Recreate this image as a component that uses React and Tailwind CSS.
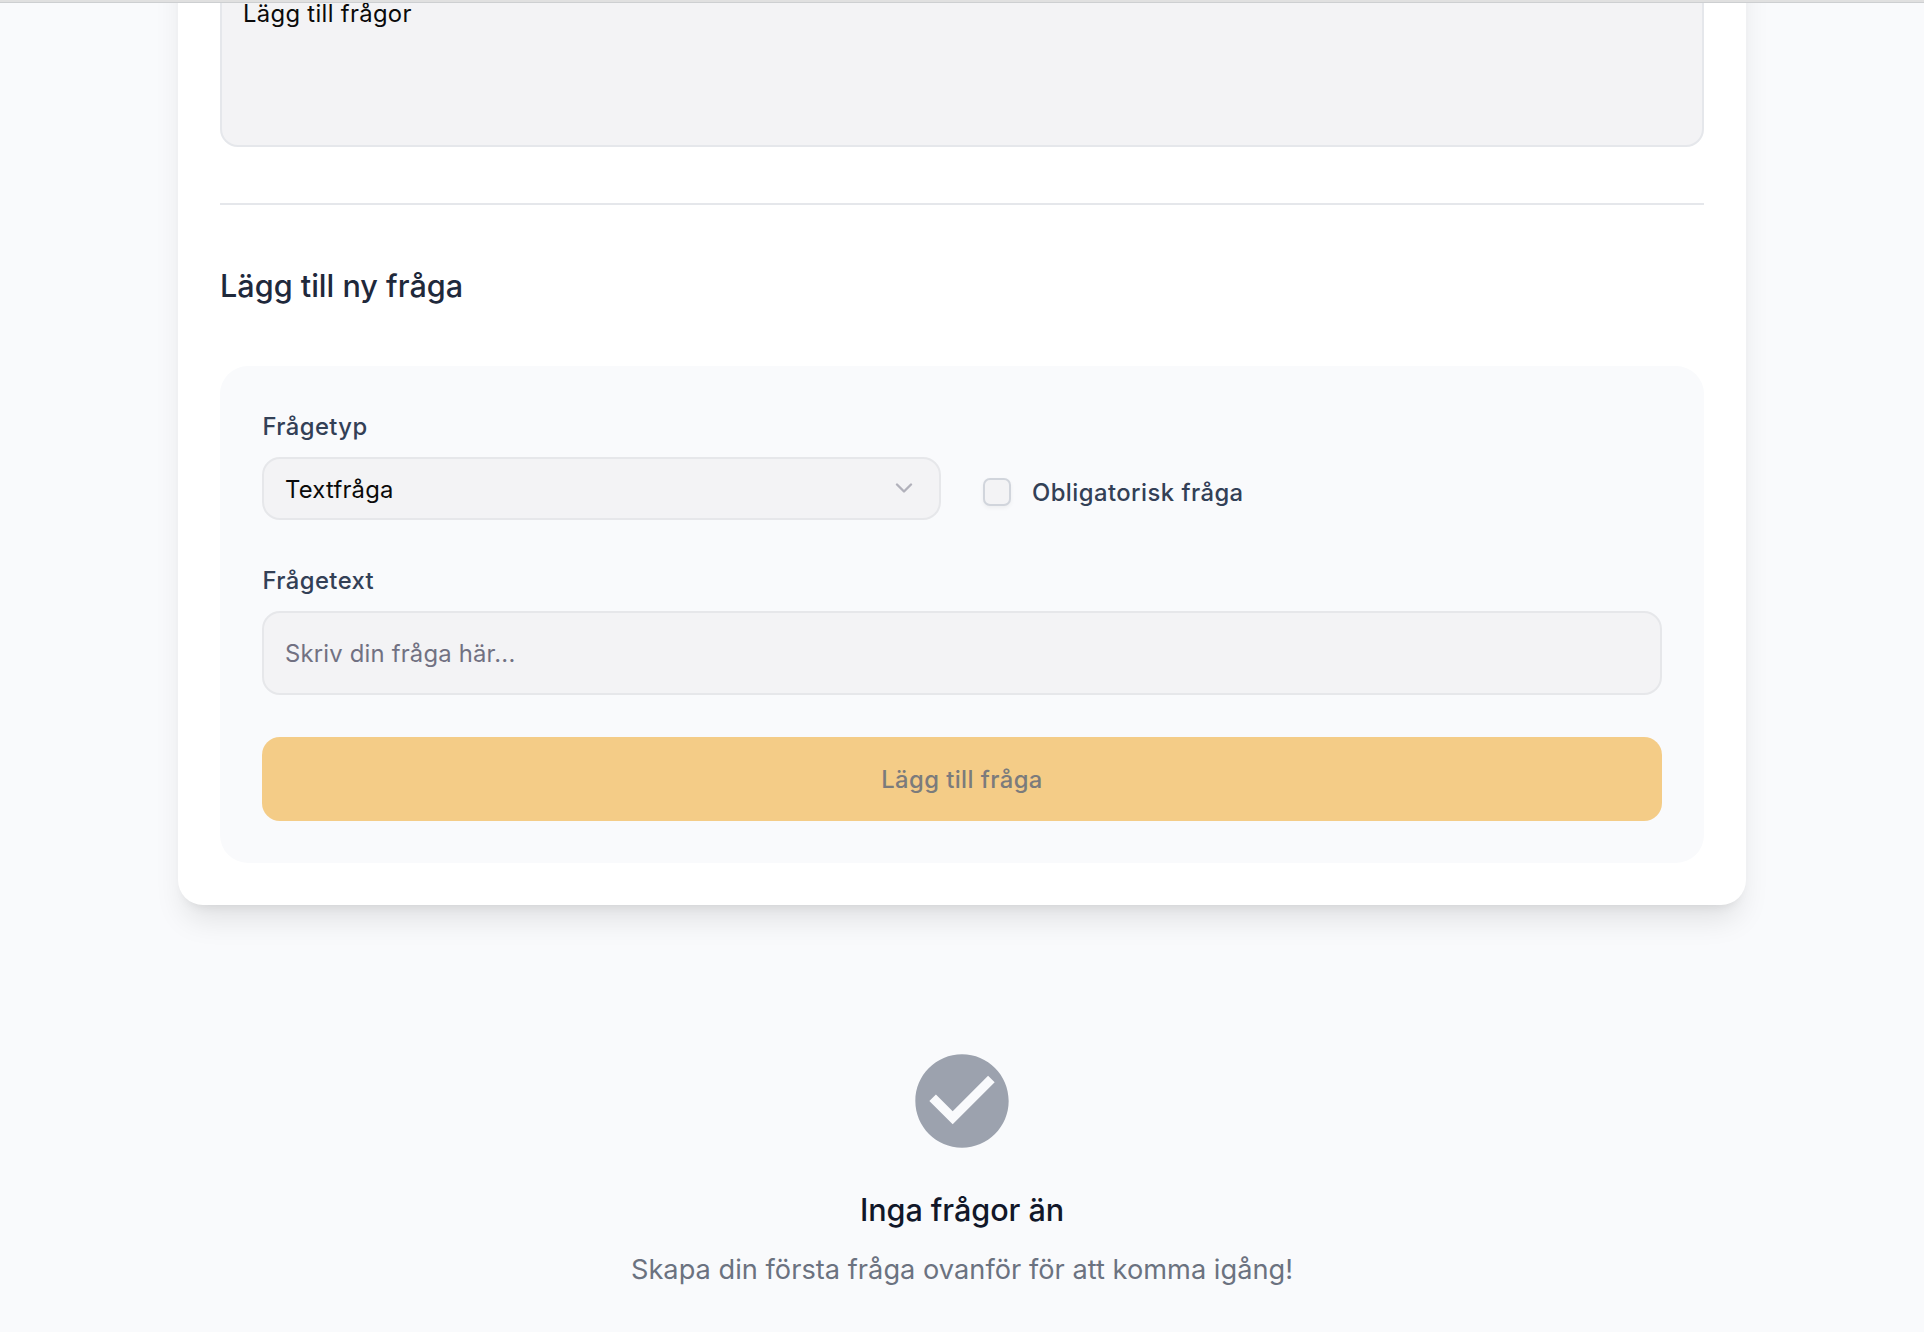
import { ChevronDown } from 'lucide-react';

function FieldLabel({ children }) {
  return (
    <div className="mt-[1px] mb-[13px] pl-[0.5px] text-[23.8px] leading-[35px] font-medium tracking-[0.42px] text-[#334056]">
      {children}
    </div>
  );
}

function QuestionForm() {
  return (
    <section className="mt-[60px] rounded-[28px] bg-[#f9fafc] p-[42px]">
      <div className="grid grid-cols-2 gap-[42px]">
        <div className="flex flex-col">
          <FieldLabel>Frågetyp</FieldLabel>
          <button
            type="button"
            className="flex h-[63px] items-start justify-between rounded-[18px] border-2 border-[#e6e7ea] bg-[#f3f3f5] px-[21px] pt-[13px] text-left"
          >
            <span className="text-[23.8px] leading-[35px] tracking-[0.22px] text-[#0a0a0a]">Textfråga</span>
            <ChevronDown size={28} strokeWidth={2} className="mt-[2px] text-[#717182] opacity-50" />
          </button>
        </div>
        <label className="flex items-start gap-[21px] pt-[67px]">
          <span className="mt-[3px] size-7 shrink-0 rounded-[7px] border-2 border-[#d1d5dc] bg-[#f3f3f5] shadow-[0_2px_4px_rgba(0,0,0,0.05)]" />
          <span className="text-[23.8px] leading-[35px] font-medium tracking-[0.46px] text-[#334056]">
            Obligatorisk fråga
          </span>
        </label>
      </div>

      <div className="mt-[42px] flex flex-col">
        <FieldLabel>Frågetext</FieldLabel>
        <div className="h-[84px] rounded-[18px] border-2 border-[#e6e7ea] bg-[#f3f3f5] px-[21px] pt-[23px] text-[23.8px] leading-[35px] tracking-[0.21px] text-[#717182]">
          Skriv din fråga här...
        </div>
      </div>

      <button
        type="button"
        className="mt-[42px] block h-[84px] w-full rounded-[18px] bg-[#f4cc87] text-[23.8px] leading-[35px] font-medium tracking-[0.43px] text-[#7b7b7c]"
      >
        Lägg till fråga
      </button>
    </section>
  );
}

function EmptyState() {
  return (
    <div className="mt-[140px] flex flex-col items-center">
      <svg viewBox="0 0 24 24" className="size-28 fill-[#9ca2ae]">
        <path d="M12 2C6.48 2 2 6.48 2 12s4.48 10 10 10 10-4.48 10-10S17.52 2 12 2zm-2 15l-5-5 1.41-1.41L10 14.17l7.59-7.59L19 8l-9 9z" />
      </svg>
      <h3 className="mt-8 text-[30.6px] leading-[41px] font-medium tracking-[-0.07px] text-[#111729]">
        Inga frågor än
      </h3>
      <p className="mt-5 text-[27.2px] leading-[39px] tracking-[0.02px] text-[#6b7280]">
        Skapa din första fråga ovanför för att komma igång!
      </p>
    </div>
  );
}

export default function App() {
  return (
    <div className="flex h-[1332px] w-[1924px] flex-col overflow-hidden bg-[#f9fafc] font-['Inter',sans-serif]">
      <header className="h-[3px] shrink-0 border-b border-[#cdcfd1] bg-[#e0e0e0]" />
      <main className="min-h-0 flex-1 overflow-hidden">
        <div className="mx-auto -mt-20 w-[1568px] rounded-[25px] bg-white p-[42px] shadow-[0_20px_30px_-6px_rgba(0,0,0,0.1),0_8px_12px_-8px_rgba(0,0,0,0.1)]">
          <div className="h-[182px] rounded-[18px] border-2 border-[#e5e7eb] bg-[#f3f3f5] px-[21px] pt-[29px] text-[23.8px] leading-[35px] tracking-[0.33px] text-[#0a0a0a]">
            Lägg till frågor
          </div>
          <hr className="mt-14 border-t-2 border-[#e5e7eb]" />
          <h2 className="mt-[60px] text-[30.6px] leading-[41px] font-medium text-[#1f293b]">Lägg till ny fråga</h2>
          <QuestionForm />
        </div>
        <EmptyState />
      </main>
    </div>
  );
}
